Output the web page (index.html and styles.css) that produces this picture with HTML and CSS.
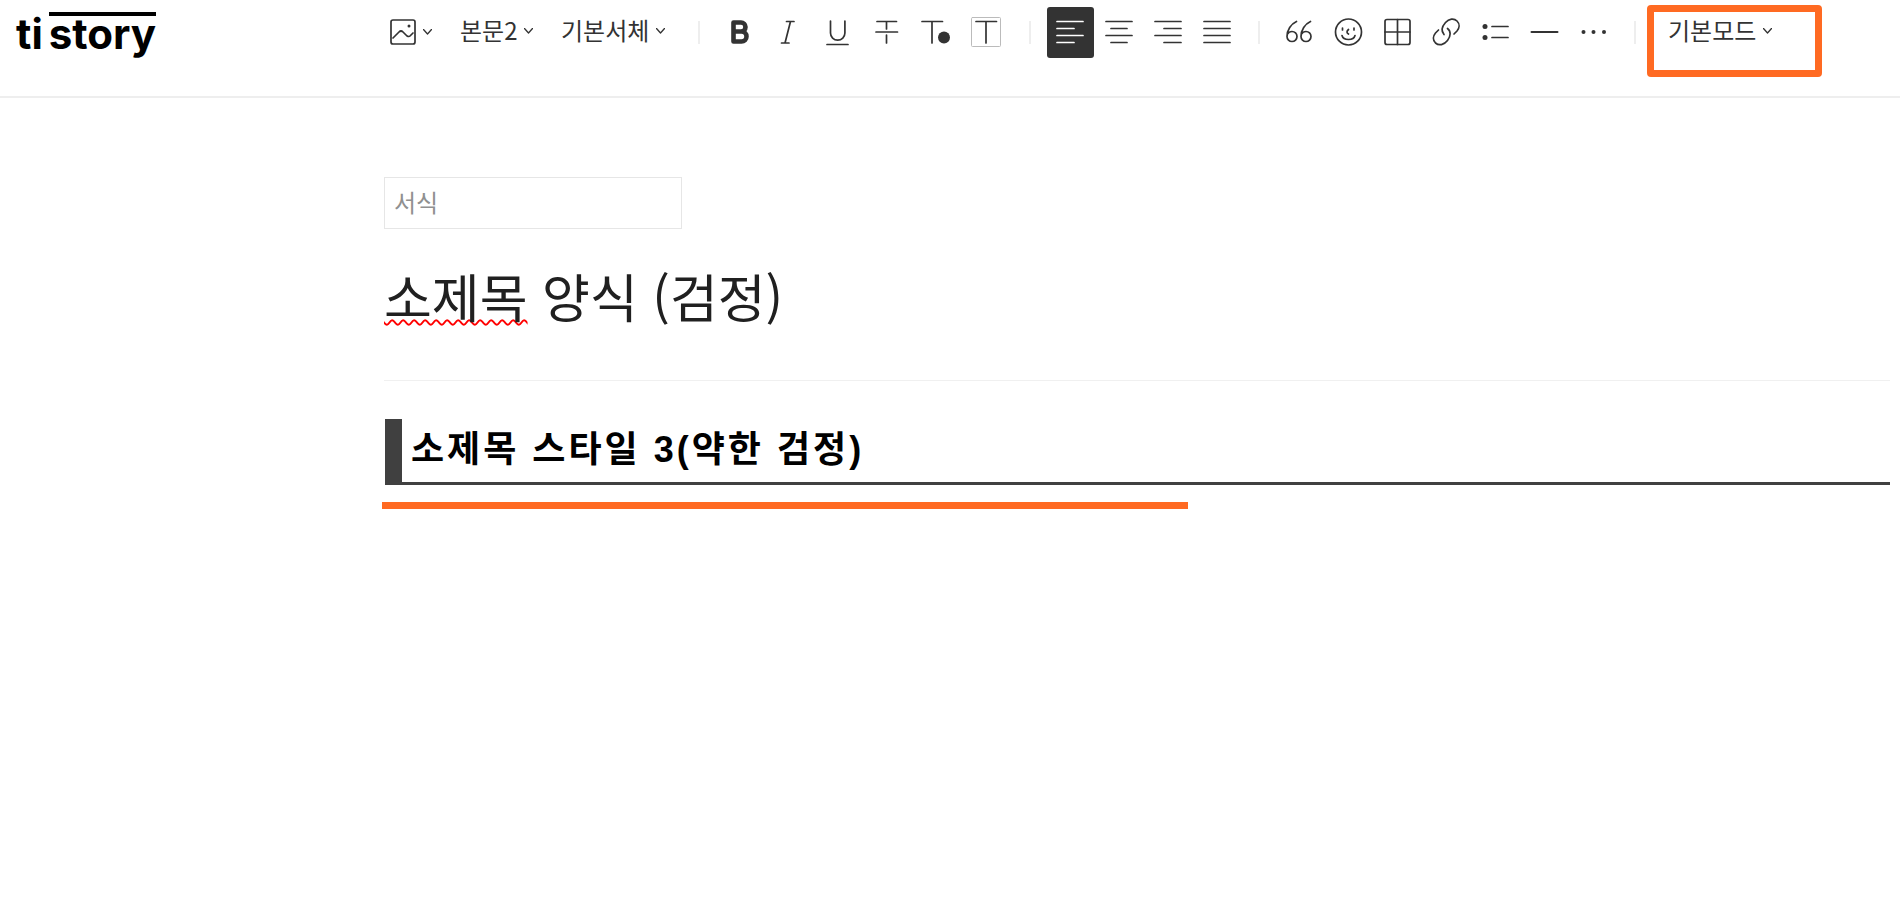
FILE: index.html
```html
<!DOCTYPE html>
<html lang="ko">
<head>
  <meta charset="UTF-8" />
  <meta name="viewport" content="width=device-width, initial-scale=1.0" />
  <title>tistory</title>
  <link rel="stylesheet" href="styles.css">
</head>
<body>
  <header class="editor-header">
    <a class="logo" href="#" aria-label="tistory"><span>ti</span><span class="logo-line">story</span></a>

    <div class="toolbar">
      <button type="button" class="image-btn" aria-label="첨부">
        <svg width="26" height="26" viewBox="0 0 26 26"><rect x="1" y="1" width="24" height="24" rx="2"/><path d="M3 19l6-6q2-2 4 0l4 4q2 1 3 0l3-3"/><circle class="fill" cx="19" cy="7" r="1.5"/></svg>
        <svg class="chevron" width="9" height="6" viewBox="0 0 9 6"><path d="M0.5 0.5l4 4.5 4-4.5"/></svg>
      </button>
      <label class="dropdown">
        <select aria-label="문단 모양"><option>본문2</option></select>
        <svg class="chevron" width="9" height="6" viewBox="0 0 9 6"><path d="M0.5 0.5l4 4.5 4-4.5"/></svg>
      </label>
      <label class="dropdown">
        <select aria-label="글꼴"><option>기본서체</option></select>
        <svg class="chevron" width="9" height="6" viewBox="0 0 9 6"><path d="M0.5 0.5l4 4.5 4-4.5"/></svg>
      </label>

      <span class="divider"></span>

      <div class="group group-font">
        <button type="button" aria-label="굵게"><svg viewBox="0 0 47 51"><path class="heavy" d="M17.500 15.500h7.500a4.500 4.500 0 0 1 0 9h-7.500zM17.500 24.500h8a5 5 0 0 1 0 10h-8z"/></svg></button>
        <button type="button" aria-label="기울임"><svg viewBox="0 0 47 51"><path d="M21.500 14.500H29M16.500 36H24M25.500 14.500L20 36"/></svg></button>
        <button type="button" aria-label="밑줄"><svg viewBox="0 0 47 51"><path d="M16.500 14v12a7.200 7.200 0 0 0 14.400 0V14M13 37.500h21"/></svg></button>
        <button type="button" aria-label="취소선"><svg viewBox="0 0 47 51"><path d="M14 14.500h19.500M23.500 14.500V22M23.500 28v8M13 25h21.500"/></svg></button>
        <button type="button" aria-label="글자색"><svg viewBox="0 0 47 51"><path d="M10 14.500h20.500M20 14.500V36"/><circle class="fill" cx="32" cy="30.500" r="6"/></svg></button>
        <button type="button" aria-label="배경색"><svg viewBox="0 0 47 51"><rect class="pale" x="10.500" y="10.500" width="29" height="29" rx="1"/><path d="M15 14.500h20.500M25 14.500V36"/></svg></button>
      </div>

      <span class="divider"></span>

      <div class="group">
        <button type="button" class="active" aria-label="왼쪽 정렬" aria-pressed="true"><svg viewBox="0 0 47 51"><path d="M10 14.500h26M10 21.500h17M10 28.500h26M10 35.500h17"/></svg></button>
        <button type="button" aria-label="가운데 정렬"><svg viewBox="0 0 47 51"><path d="M10 14.500h26M15 21.500h16M10 28.500h26M15 35.500h16"/></svg></button>
        <button type="button" aria-label="오른쪽 정렬"><svg viewBox="0 0 47 51"><path d="M10 14.500h26M19 21.500h17M10 28.500h26M19 35.500h17"/></svg></button>
        <button type="button" aria-label="양쪽 정렬"><svg viewBox="0 0 47 51"><path d="M10 14.500h26M10 21.500h26M10 28.500h26M10 35.500h26"/></svg></button>
      </div>

      <span class="divider"></span>

      <div class="group">
        <button type="button" aria-label="인용"><svg viewBox="0 0 47 51"><path d="M20.500 14.500C15 17 11 23 11 29.500a5 5 0 1 0 5-5q-3 0-4.500 2.500M34.500 14.500C29 17 25 23 25 29.500a5 5 0 1 0 5-5q-3 0-4.500 2.500"/></svg></button>
        <button type="button" aria-label="이모티콘"><svg viewBox="0 0 47 51"><circle cx="23.500" cy="25" r="13"/><path d="M17.500 21v2M29 21v2M23.500 22.500q-3 2.500 0 4.500M17 28.500q1 4 6.500 4t6.500-4"/></svg></button>
        <button type="button" aria-label="표"><svg viewBox="0 0 47 51"><rect x="11" y="12.500" width="25" height="25" rx="2"/><path d="M23.500 12.500v25M11 25h25"/></svg></button>
        <button type="button" aria-label="링크"><svg viewBox="0 0 47 51"><path d="M21 27.500C18 24 19 19.500 22.500 15.500C26 11.500 31 11 34 14C37 17 36.500 21 34 24L31 27"/><path d="M24.500 21.500C28 24 28 29 24.500 33.500C21 38 16 39 12.500 36C9.500 33 10 29 12.500 26L15.500 23"/></svg></button>
        <button type="button" aria-label="목록"><svg viewBox="0 0 47 51"><circle class="fill" cx="13" cy="19.500" r="2.500"/><circle class="fill" cx="13" cy="30.500" r="2.500"/><path d="M20 19.500h16M20 30.500h16"/></svg></button>
        <button type="button" aria-label="구분선"><svg viewBox="0 0 47 51"><path class="thick" d="M10.500 25h26"/></svg></button>
        <button type="button" aria-label="더보기"><svg viewBox="0 0 47 51"><circle class="fill" cx="13.500" cy="25" r="2"/><circle class="fill" cx="23.500" cy="25" r="2"/><circle class="fill" cx="34" cy="25" r="2"/></svg></button>
      </div>

      <span class="divider"></span>

      <label class="dropdown mode">
        <select aria-label="편집 모드"><option>기본모드</option></select>
        <svg class="chevron" width="9" height="6" viewBox="0 0 9 6"><path d="M0.5 0.5l4 4.5 4-4.5"/></svg>
      </label>
    </div>
  </header>

  <main class="editor">
    <select class="category" aria-label="서식"><option>서식</option></select>
    <h1 class="post-title"><span class="misspelled">소제목</span> 양식 (검정)</h1>
    <h3 class="post-subtitle">소제목 스타일 3(약한 검정)</h3>
    <div class="highlight"></div>
  </main>
</body>
</html>
```
FILE: styles.css
```css
:root {
  --text-color: #333;
  --line-color: #eee;
  --bar-color: #404040;
  --accent-color: #ff6a22;
  --side-width: 384px;
}
* {
  box-sizing: border-box;
}
body {
  margin: 0;
  background: #fff;
  color: var(--text-color);
  font-family: "Noto Sans CJK KR", sans-serif;
}
button,
select {
  margin: 0;
  padding: 0;
  border: 0;
  background: none;
  color: inherit;
  font-family: inherit;
  font-size: 24px;
  font-weight: 400;
  cursor: pointer;
}
select {
  appearance: none;
}
svg {
  display: block;
  fill: none;
  stroke: currentColor;
  stroke-width: 1.7;
  stroke-linecap: round;
  stroke-linejoin: round;
}
.fill {
  fill: currentColor;
  stroke: none;
}
.heavy {
  stroke-width: 4.6;
}
.thick {
  stroke-width: 2;
}
.pale {
  stroke: #bbb;
  stroke-width: 1;
}
.chevron {
  stroke-width: 1.3;
}

/* header */
.editor-header {
  display: grid;
  grid-template-columns: var(--side-width) 1fr;
  height: 98px;
  border-bottom: 2px solid var(--line-color);
}
.logo {
  display: flex;
  align-items: flex-start;
  gap: 6px;
  padding: 12px 0 0 16px;
  color: #000;
  font-family: Inter, sans-serif;
  font-size: 42px;
  font-weight: 700;
  line-height: 44px;
  text-decoration: none;
}
.logo-line {
  border-top: 4px solid #000;
  line-height: 36px;
}
.toolbar {
  display: flex;
  align-items: flex-start;
  padding-top: 5px;
}
.image-btn,
.dropdown {
  display: flex;
  align-items: center;
  height: 54px;
}
.image-btn {
  gap: 7px;
  margin: 0 28px 0 6px;
}
.dropdown {
  gap: 6px;
  height: 52px;
  margin-right: 28px;
}
.dropdown select {
  height: 40px;
  padding-bottom: 2px;
  line-height: 38px;
}
.divider {
  flex: none;
  width: 2px;
  height: 23px;
  margin: 16px 16px 0 15px;
  background: var(--line-color);
}
.dropdown + .divider {
  margin-left: 5px;
}
.divider:last-of-type {
  margin-right: 11px;
}
.group {
  display: flex;
  padding-top: 2px;
}
.group-font {
  margin-right: 4px;
}
.group button {
  width: 47px;
  height: 51px;
  margin-right: 2px;
  border-radius: 3px;
}
.group button.active {
  background: var(--text-color);
  color: #fff;
}
.mode {
  width: 175px;
  height: 72px;
  padding: 0 0 20px 14px;
  border: 7px solid var(--accent-color);
  border-radius: 4px;
}

/* editor */
.editor {
  padding: 79px 10px 0 var(--side-width);
}
.category {
  display: block;
  width: 298px;
  height: 52px;
  padding: 0 9px 4px;
  border: 1px solid #e6e6e6;
  color: #909090;
}
.post-title {
  margin: 0;
  padding: 29px 0 46px;
  border-bottom: 1px solid #f0f0f0;
  color: #202020;
  font-size: 52px;
  font-weight: 400;
  line-height: 76px;
}
.misspelled {
  text-decoration: underline wavy #f00 2px;
  text-decoration-skip-ink: none;
}
.post-subtitle {
  margin: 38px 0 0 1px;
  padding: 1px 0 2px 9px;
  border-left: 17px solid var(--bar-color);
  border-bottom: 3px solid var(--bar-color);
  color: #000;
  font-family: "Liberation Sans", "Noto Sans CJK KR", sans-serif;
  font-size: 36px;
  font-weight: 700;
  letter-spacing: 3px;
  line-height: 60px;
}
.highlight {
  width: 806px;
  max-width: 100%;
  height: 7px;
  margin: 17px 0 0 -2px;
  background: var(--accent-color);
}
```
